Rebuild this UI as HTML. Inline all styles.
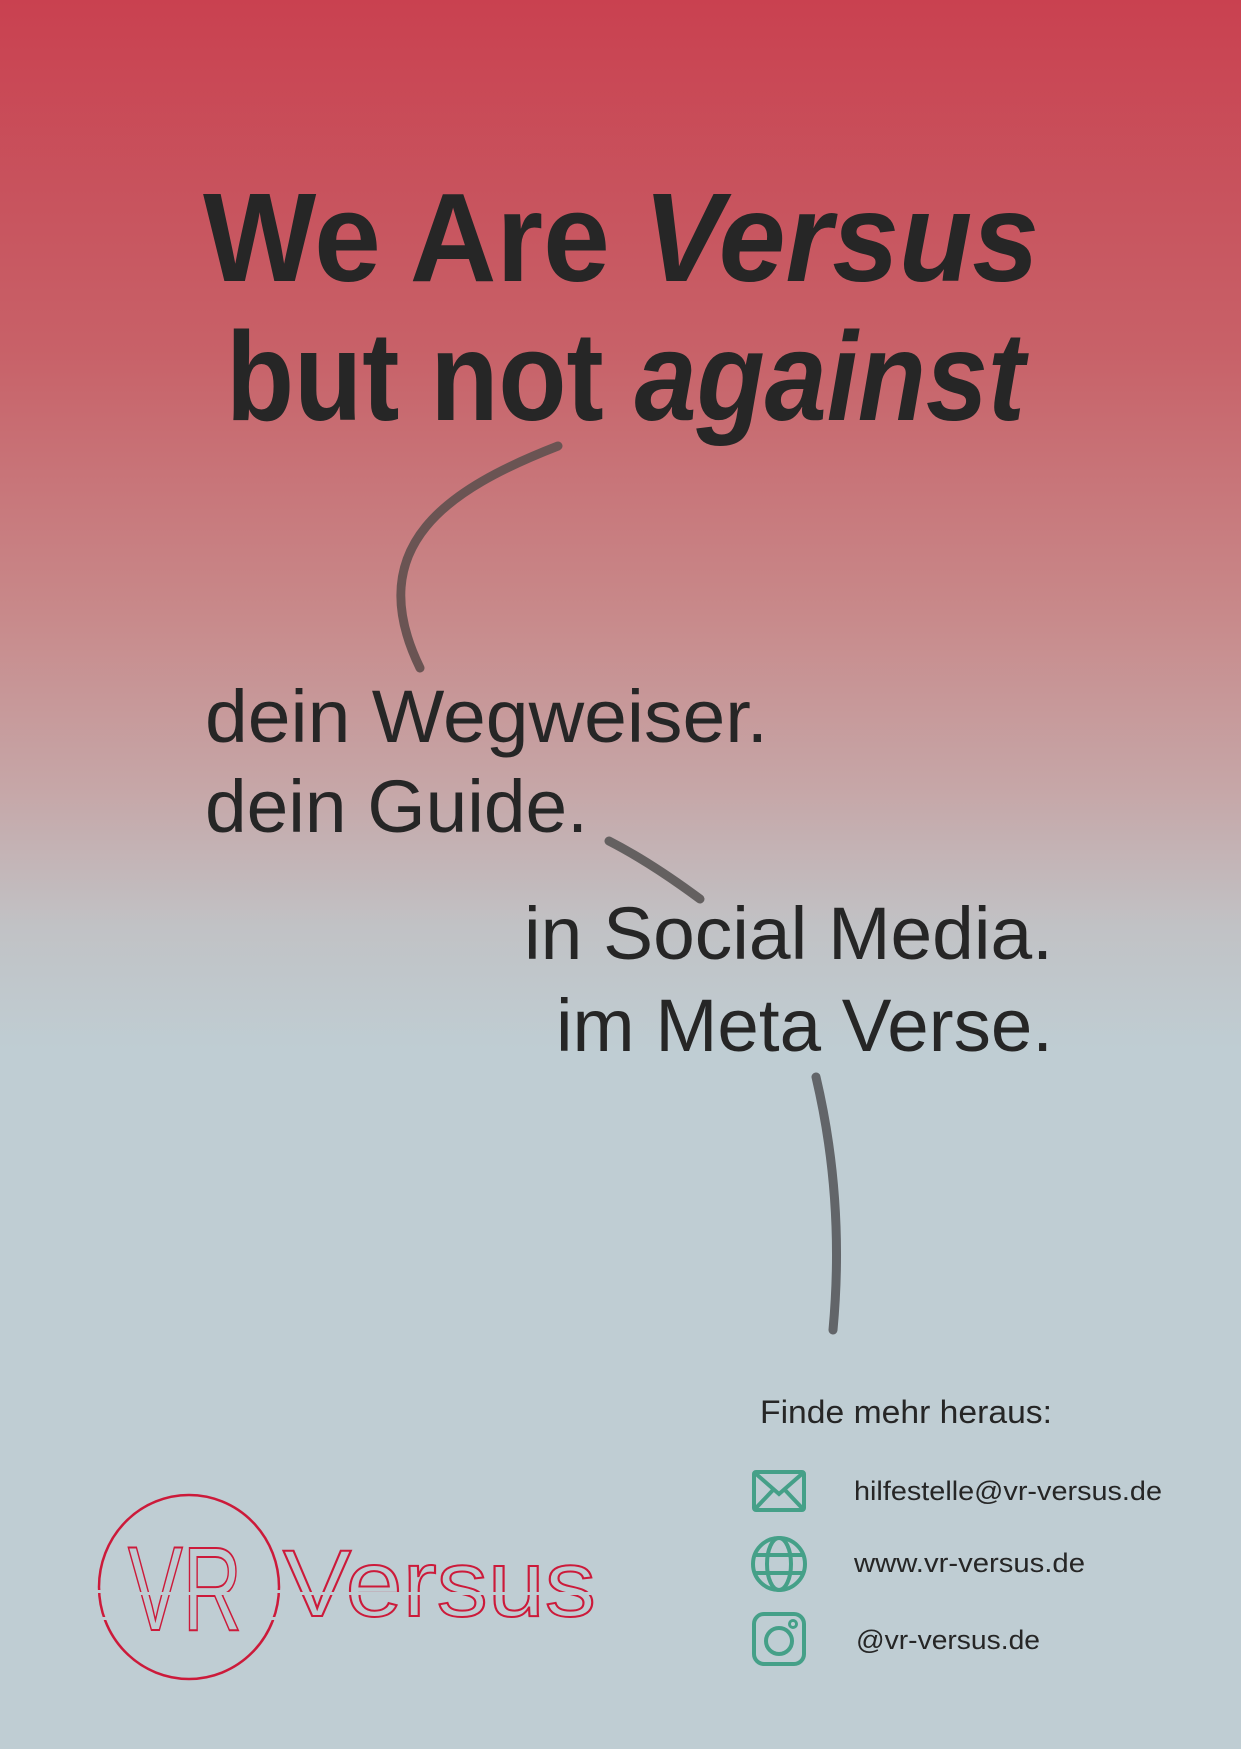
<!DOCTYPE html>
<html><head><meta charset="utf-8"><style>
html,body{margin:0;padding:0;width:1241px;height:1749px;overflow:hidden}
svg{display:block}
</style></head><body>
<svg width="1241" height="1749" viewBox="0 0 1241 1749" xmlns="http://www.w3.org/2000/svg">
<defs>
<linearGradient id="bg" x1="0" y1="0" x2="0" y2="1749" gradientUnits="userSpaceOnUse">
<stop offset="0" stop-color="#c94150"/>
<stop offset="0.2" stop-color="#c86168"/>
<stop offset="0.35" stop-color="#c8898a"/>
<stop offset="0.45" stop-color="#c6a6a7"/>
<stop offset="0.53" stop-color="#c1c2c5"/>
<stop offset="0.6" stop-color="#bfcdd3"/>
<stop offset="1" stop-color="#bfcdd3"/>
</linearGradient>
<clipPath id="top"><rect x="0" y="1400" width="700" height="192"/></clipPath>
<clipPath id="bot"><rect x="0" y="1595" width="700" height="200"/></clipPath>
<clipPath id="cg"><path d="M0 1400H700V1590H0Z M0 1620H700V1749H0Z M40 1593H700V1617H40Z" clip-rule="evenodd"/></clipPath>
</defs>
<rect width="1241" height="1749" fill="url(#bg)"/>
<g fill="#262626" font-family="Liberation Sans, sans-serif">
<text x="203" y="281" font-size="126" font-weight="bold" textLength="836" lengthAdjust="spacingAndGlyphs">We Are <tspan font-style="italic">Versus</tspan></text>
<text x="226" y="420" font-size="126" font-weight="bold" textLength="799" lengthAdjust="spacingAndGlyphs">but not <tspan font-style="italic">against</tspan></text>
<text x="205" y="742" font-size="74" textLength="563" lengthAdjust="spacingAndGlyphs">dein Wegweiser.</text>
<text x="205" y="832" font-size="74" textLength="383" lengthAdjust="spacingAndGlyphs">dein Guide.</text>
<text x="524" y="959" font-size="74" textLength="529" lengthAdjust="spacingAndGlyphs">in Social Media.</text>
<text x="556" y="1051" font-size="74" textLength="497" lengthAdjust="spacingAndGlyphs">im Meta Verse.</text>
<text x="760" y="1423" font-size="32" textLength="292" lengthAdjust="spacingAndGlyphs">Finde mehr heraus:</text>
<text x="854" y="1500" font-size="27" textLength="308" lengthAdjust="spacingAndGlyphs">hilfestelle@vr-versus.de</text>
<text x="854" y="1572" font-size="27" textLength="231" lengthAdjust="spacingAndGlyphs">www.vr-versus.de</text>
<text x="856" y="1649" font-size="27" textLength="184" lengthAdjust="spacingAndGlyphs">@vr-versus.de</text>
</g>
<g fill="none" stroke-linecap="round" stroke-width="9">
<path d="M558 446 C450 488 360 545 420 668" stroke="#6a5453"/>
<path d="M609 841 Q650 862 700 899" stroke="#646060"/>
<path d="M816 1077 Q845 1200 833 1330" stroke="#626569"/>
</g>
<g fill="none" stroke="#45a088" stroke-width="4">
<rect x="754" y="1472" width="50" height="38" rx="2"/>
<path d="M755 1473 L779 1494 L803 1473 M755 1509 L773 1490 M803 1509 L785 1490"/>
<circle cx="779" cy="1564" r="26"/>
<ellipse cx="779" cy="1564" rx="12" ry="26"/>
<path d="M754 1555H804 M754 1573H804"/>
<rect x="754" y="1614" width="50" height="50" rx="10"/>
<circle cx="779" cy="1641" r="13"/>
<circle cx="793" cy="1624" r="3.5" stroke-width="3"/>
</g>
<g fill="none" stroke="#cc1a3a" stroke-width="2.5" font-family="Liberation Sans, sans-serif">
<g clip-path="url(#cg)"><ellipse cx="189" cy="1587" rx="90" ry="92"/></g>
<g clip-path="url(#top)">
<text x="128" y="1630" font-size="120" textLength="114" lengthAdjust="spacingAndGlyphs" stroke-width="2">VR</text>
<text x="283" y="1616" font-size="95" textLength="313" lengthAdjust="spacingAndGlyphs" stroke-width="2">Versus</text>
</g>
<g clip-path="url(#bot)" transform="translate(-13 0)">
<text x="141" y="1630" font-size="120" textLength="114" lengthAdjust="spacingAndGlyphs" stroke-width="2">VR</text>
<text x="296" y="1616" font-size="95" textLength="313" lengthAdjust="spacingAndGlyphs" stroke-width="2">Versus</text>
</g>
</g>
</svg>
</body></html>
